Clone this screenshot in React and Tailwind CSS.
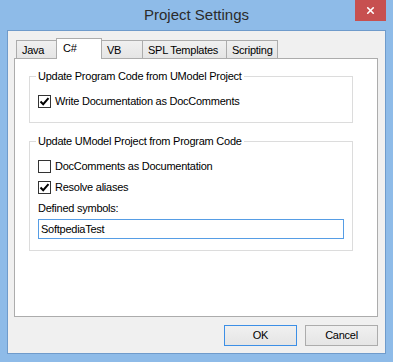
import { X } from "lucide-react";

const FONT = { fontFamily: '"Liberation Sans", Arial, sans-serif' };

const TABS = [
  { label: "Java", w: "w-[41px]" },
  { label: "C#", w: "w-[46px]", active: true },
  { label: "VB", w: "w-[42px]" },
  { label: "SPL Templates", w: "w-[85px]" },
  { label: "Scripting", w: "w-[52px]" },
];

const Check = ({ checked }) => (
  <span className="flex h-[13px] w-[13px] shrink-0 items-center justify-center border border-[#333333] bg-white">
    {checked && (
      <svg width="11" height="11" viewBox="0 0 11 11">
        <path d="M1.5 5.5 L4.2 8.2 L9.5 2.2" fill="none" stroke="#000" strokeWidth="2" />
      </svg>
    )}
  </span>
);

const CheckRow = ({ checked, children, className = "" }) => (
  <div className={`flex h-[13px] items-center gap-[4px] ${className}`}>
    <Check checked={checked} />
    <span className="leading-[13px]">{children}</span>
  </div>
);

const Group = ({ title, className = "", children }) => (
  <div className={`relative ml-[14px] w-[324px] border border-[#dcdcdc] pl-[8px] ${className}`}>
    {/* caption sits on top of the frame line */}
    <span className="absolute -top-[7px] left-[6px] bg-white px-[2px] leading-[13px]">{title}</span>
    {children}
  </div>
);

const Btn = ({ children, focused }) => (
  <button
    type="button"
    className={`h-[21px] w-[73px] border bg-gradient-to-b from-[#f0f0f0] to-[#e5e5e5] text-[11px] tracking-[-0.25px] text-black ${
      focused ? "border-[#3c8fe6]" : "border-[#acacac]"
    }`}
  >
    {children}
  </button>
);

export default function App() {
  return (
    <div
      className="flex h-[362px] w-[393px] flex-col bg-[#8ebbe8] px-[7px] text-[11px] tracking-[-0.25px] text-black"
      style={FONT}
    >
      {/* title bar */}
      <div className="grid h-[30px] grid-cols-[1fr_auto_1fr] items-start">
        <div />
        <div className="pt-[6px] text-[15px] leading-[18px] tracking-normal text-[#2b2b2b]">Project Settings</div>
        <div className="flex justify-end">
          <div className="flex h-[21px] w-[31px] items-center justify-center bg-[#c75050]">
            <X className="h-[11px] w-[11px] text-white" strokeWidth={3.5} />
          </div>
        </div>
      </div>

      {/* client area */}
      <div className="flex h-[324px] flex-col border border-[#6f9bcb] bg-[#f0f0f0] pl-[6px] pr-[7px] pt-[7px]">
        <div className="flex h-[20px] items-end pl-[2px]">
          {TABS.map((t, i) =>
            t.active ? (
              <div
                key={t.label}
                className={`relative z-10 -mb-px -ml-px h-[21px] ${t.w} border border-b-0 border-[#acacac] bg-white pl-[6px] pt-[3px] leading-[13px]`}
              >
                {t.label}
              </div>
            ) : (
              <div
                key={t.label}
                className={`h-[18px] ${t.w} ${i > 0 ? "-ml-px" : ""} border border-b-0 border-[#acacac] bg-gradient-to-b from-[#f0f0f0] to-[#e5e5e5] pl-[5px] pt-[3px] leading-[13px]`}
              >
                {t.label}
              </div>
            )
          )}
        </div>

        <div className="h-[259px] w-[364px] border border-[#acacac] bg-white pt-[17px]">
          <Group title="Update Program Code from UModel Project" className="h-[47px] pt-[18px]">
            <CheckRow checked>Write Documentation as DocComments</CheckRow>
          </Group>

          <Group title="Update UModel Project from Program Code" className="mt-[18px] h-[110px] pt-[18px]">
            <CheckRow checked={false}>DocComments as Documentation</CheckRow>
            <CheckRow checked className="mt-[8px]">Resolve aliases</CheckRow>
            <div className="mt-[8px] h-[13px] leading-[13px]">Defined symbols:</div>
            <div className="mt-[4px] flex h-[20px] w-[306px] items-center border border-[#569de5] bg-white pl-[2px]">
              SoftpediaTest
            </div>
          </Group>
        </div>

        <div className="mt-[8px] flex justify-end gap-[8px]">
          <Btn focused>OK</Btn>
          <Btn>Cancel</Btn>
        </div>
      </div>
    </div>
  );
}
